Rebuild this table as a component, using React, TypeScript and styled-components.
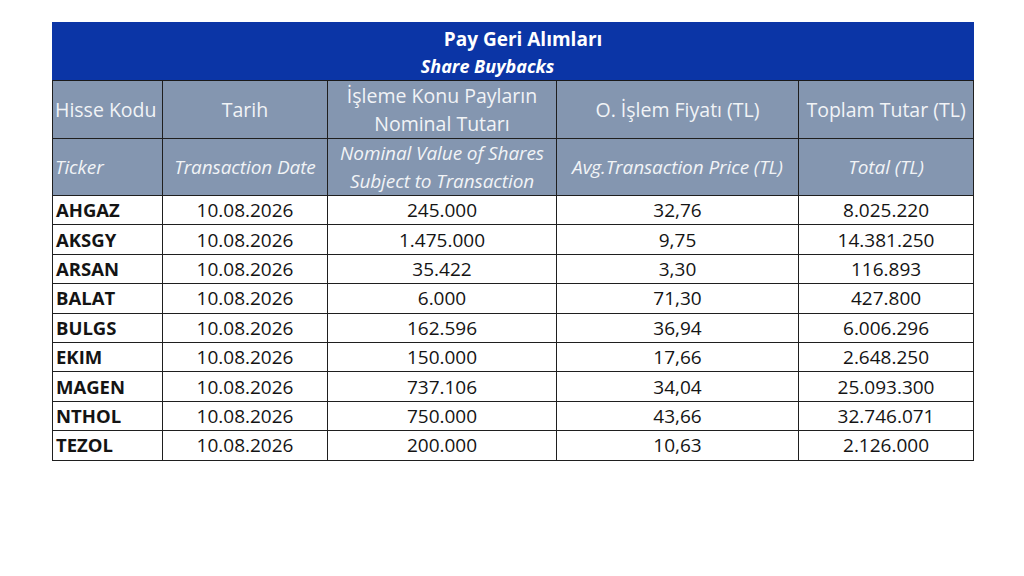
import React from "react";
import styled, { createGlobalStyle } from "styled-components";

const Global = createGlobalStyle`
  html, body { margin: 0; padding: 0; background: #ffffff; }
  body { font-family: "Open Sans", "Noto Sans", sans-serif; }
`;

const Page = styled.div`
  width: 1024px;
  height: 576px;
  padding: 22px 0 0 52px;
  box-sizing: border-box;
`;

const Table = styled.table`
  width: 921px;
  table-layout: fixed;
  border-collapse: collapse;
`;

const TitleCell = styled.th`
  background: #0b35a6;
  color: #ffffff;
  height: 57px;
  padding: 0;
  text-align: center;
  border: 1px solid #0b35a6;
  border-bottom: 1.5px solid #1a1a1a;
`;

const TitleMain = styled.div`
  font-size: 19px;
  font-weight: 700;
  line-height: 28px;
  padding-left: 20px;
`;

const TitleSub = styled.div`
  font-size: 18px;
  font-weight: 700;
  font-style: italic;
  line-height: 26px;
  padding-right: 51px;
`;

const HeadCell = styled.th<{ $italic?: boolean; $left?: boolean; $h: number }>`
  background: #8496b0;
  color: #f1f3f6;
  height: ${(p) => p.$h}px;
  padding: 0 2px;
  border: 1.5px solid #1f1f1f;
  font-weight: 400;
  font-style: ${(p) => (p.$italic ? "italic" : "normal")};
  font-size: ${(p) => (p.$italic ? 19 : 19.5)}px;
  line-height: 28px;
  text-align: ${(p) => (p.$left ? "left" : "center")};
  white-space: nowrap;
  letter-spacing: ${(p) => (p.$italic ? "-0.1px" : "0")};
`;

const Cell = styled.td<{ $ticker?: boolean }>`
  height: 28.4px;
  padding: 0 ${(p) => (p.$ticker ? "3px" : "0")};
  border: 1px solid #1f1f1f;
  color: #141414;
  font-size: ${(p) => (p.$ticker ? 18.5 : 19)}px;
  line-height: 28px;
  font-weight: ${(p) => (p.$ticker ? 700 : 400)};
  text-align: ${(p) => (p.$ticker ? "left" : "center")};
`;

const rows: [string, string, string, string, string][] = [
  ["AHGAZ", "10.08.2026", "245.000", "32,76", "8.025.220"],
  ["AKSGY", "10.08.2026", "1.475.000", "9,75", "14.381.250"],
  ["ARSAN", "10.08.2026", "35.422", "3,30", "116.893"],
  ["BALAT", "10.08.2026", "6.000", "71,30", "427.800"],
  ["BULGS", "10.08.2026", "162.596", "36,94", "6.006.296"],
  ["EKIM", "10.08.2026", "150.000", "17,66", "2.648.250"],
  ["MAGEN", "10.08.2026", "737.106", "34,04", "25.093.300"],
  ["NTHOL", "10.08.2026", "750.000", "43,66", "32.746.071"],
  ["TEZOL", "10.08.2026", "200.000", "10,63", "2.126.000"],
];

export default function App() {
  return (
    <Page>
      <Global />
      <Table>
        <colgroup>
          <col style={{ width: 110 }} />
          <col style={{ width: 165 }} />
          <col style={{ width: 229 }} />
          <col style={{ width: 242 }} />
          <col style={{ width: 175 }} />
        </colgroup>
        <thead>
          <tr>
            <TitleCell colSpan={5}>
              <TitleMain>Pay Geri Alımları</TitleMain>
              <TitleSub>Share Buybacks</TitleSub>
            </TitleCell>
          </tr>
          <tr>
            <HeadCell $h={57} $left>Hisse Kodu</HeadCell>
            <HeadCell $h={57}>Tarih</HeadCell>
            <HeadCell $h={57}>
              İşleme Konu Payların
              <br />
              Nominal Tutarı
            </HeadCell>
            <HeadCell $h={57}>O. İşlem Fiyatı (TL)</HeadCell>
            <HeadCell $h={57}>Toplam Tutar (TL)</HeadCell>
          </tr>
          <tr>
            <HeadCell $h={56} $italic $left>Ticker</HeadCell>
            <HeadCell $h={56} $italic>Transaction Date</HeadCell>
            <HeadCell $h={56} $italic>
              Nominal Value of Shares
              <br />
              Subject to Transaction
            </HeadCell>
            <HeadCell $h={56} $italic>Avg.Transaction Price (TL)</HeadCell>
            <HeadCell $h={56} $italic>Total (TL)</HeadCell>
          </tr>
        </thead>
        <tbody>
          {rows.map((r) => (
            <tr key={r[0]}>
              <Cell $ticker>{r[0]}</Cell>
              <Cell>{r[1]}</Cell>
              <Cell>{r[2]}</Cell>
              <Cell>{r[3]}</Cell>
              <Cell>{r[4]}</Cell>
            </tr>
          ))}
        </tbody>
      </Table>
    </Page>
  );
}
